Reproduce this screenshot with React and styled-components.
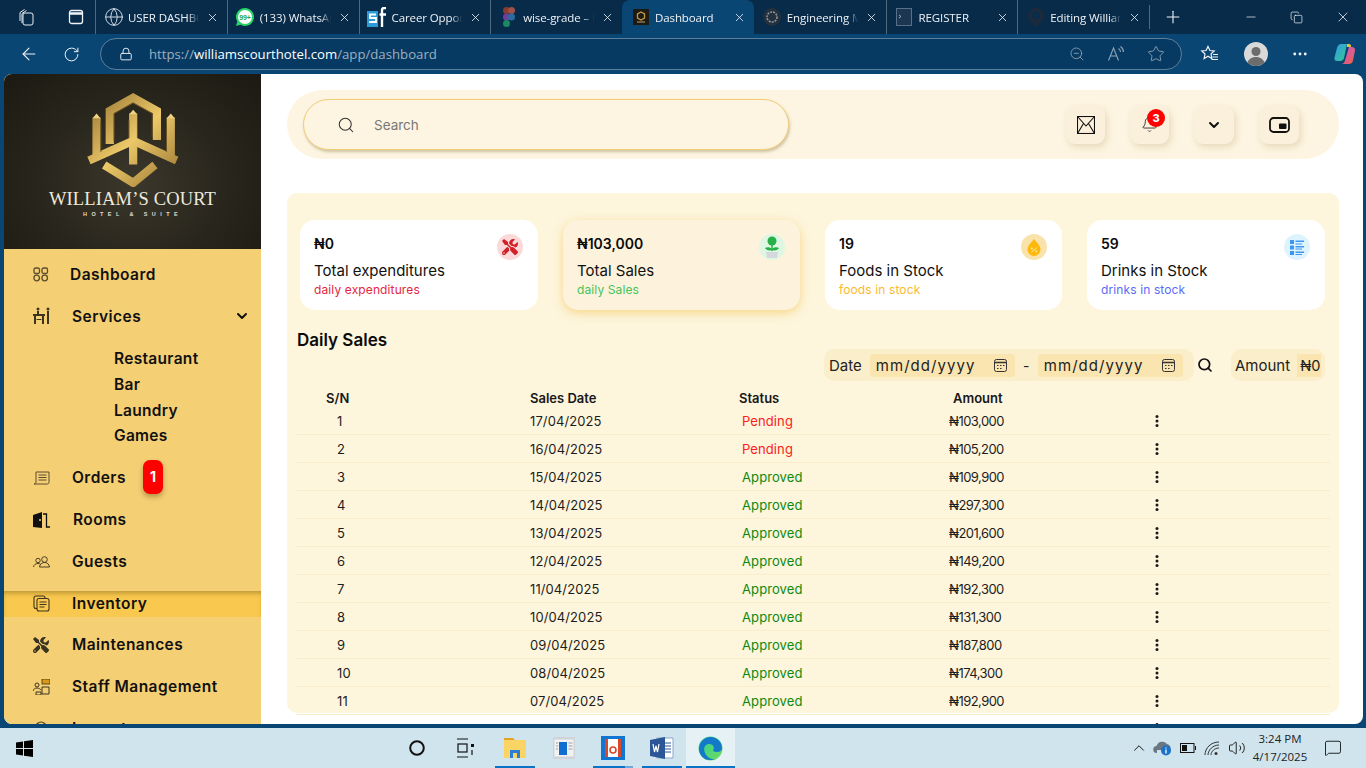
import styled, { createGlobalStyle } from 'styled-components';
import {
    ArrowLeft, RotateCw, Lock, ZoomOut, Star, Plus, X, Minus, Copy, Search, Bell, ChevronDown, ChevronUp,
    Globe, MoreHorizontal, MessageSquare, Volume2,
} from 'lucide-react';
import { FaTools } from 'react-icons/fa';

const UI = '"Inter", "Noto Sans", sans-serif';
const CHROME = '"Open Sans", "Noto Sans", sans-serif';

const GlobalStyle = createGlobalStyle`
    html, body { margin: 0; padding: 0; overflow: hidden; }
    * { box-sizing: border-box; }
    body { font-family: ${UI}; }
`;

const tabs = [
    { title: 'USER DASHBOARD', icon: 'globe' },
    { title: '(133) WhatsApp', icon: 'whatsapp' },
    { title: 'Career Opportunities', icon: 'sf' },
    { title: 'wise-grade – Figma', icon: 'figma' },
    { title: 'Dashboard', icon: 'logo', active: true },
    { title: 'Engineering Manager', icon: 'gpt' },
    { title: 'REGISTER', icon: 'term' },
    { title: 'Editing William', icon: 'github' },
];

const sales = [
    ['17/04/2025', 'Pending', '103,000'],
    ['16/04/2025', 'Pending', '105,200'],
    ['15/04/2025', 'Approved', '109,900'],
    ['14/04/2025', 'Approved', '297,300'],
    ['13/04/2025', 'Approved', '201,600'],
    ['12/04/2025', 'Approved', '149,200'],
    ['11/04/2025', 'Approved', '192,300'],
    ['10/04/2025', 'Approved', '131,300'],
    ['09/04/2025', 'Approved', '187,800'],
    ['08/04/2025', 'Approved', '174,300'],
    ['07/04/2025', 'Approved', '192,900'],
    ['06/04/2025', 'Approved', '158,400'],
];

function TabIcon({ kind }) {
    if (kind === 'globe') return <Globe size={20} color="#cfd8e0" strokeWidth={1.2} />;
    if (kind === 'whatsapp') return (
        <svg width="20" height="20" viewBox="0 0 20 20">
            <path d="M10 1a9 9 0 0 0-7.700 13.600L1 19l4.500-1.200A9 9 0 1 0 10 1z" fill="#25d366" />
            <circle cx="10" cy="10" r="7" fill="#fff" />
            <text x="10" y="12.500" textAnchor="middle" fontSize="7" fontWeight="700" fontFamily="Liberation Sans, sans-serif" fill="#25a84e">99+</text>
        </svg>
    );
    if (kind === 'sf') return (
        <svg width="20" height="20" viewBox="0 0 20 20">
            <rect x="0" y="4" width="11" height="16" fill="#2a9bd8" />
            <path d="M9 7.500H3v3.500h6v4H2" fill="none" stroke="#fff" strokeWidth="1.800" />
            <path d="M19 1h-2c-1.200 0-2 .8-2 2v17M12.500 7.500H19" fill="none" stroke="#fff" strokeWidth="2.400" />
        </svg>
    );
    if (kind === 'figma') return (
        <svg width="12" height="20" viewBox="0 0 12 20">
            <circle cx="3.500" cy="3.500" r="3.500" fill="#8c3b2e" />
            <circle cx="8.500" cy="3.500" r="3.500" fill="#a0524a" />
            <circle cx="3.500" cy="10" r="3.500" fill="#6e3d9e" />
            <circle cx="8.500" cy="10" r="3.500" fill="#2a6c9e" />
            <circle cx="3.500" cy="16.500" r="3.500" fill="#1a8a62" />
        </svg>
    );
    if (kind === 'logo') return (
        <svg width="16" height="16" viewBox="0 0 16 16">
            <rect width="16" height="16" fill="#1d1a14" />
            <path d="M8 3l3.500 2v4L8 11 4.500 9V5z" fill="none" stroke="#c49a45" strokeWidth="1.300" />
            <rect x="4" y="12.500" width="8" height="1" fill="#b8a47a" />
        </svg>
    );
    if (kind === 'gpt') return (
        <svg width="18" height="18" viewBox="0 0 18 18">
            <circle cx="9" cy="9" r="9" fill="#24303c" />
            <circle cx="9" cy="9" r="5" fill="none" stroke="#8d99a4" strokeWidth="1.500" strokeDasharray="2 1" />
        </svg>
    );
    if (kind === 'term') return (
        <svg width="16" height="18" viewBox="0 0 16 18">
            <rect x="0.500" y="0.500" width="15" height="17" fill="#1c3651" stroke="#567089" />
            <path d="M3 7l2 1.500L3 10" fill="none" stroke="#b6c2cc" strokeWidth="0.800" />
        </svg>
    );
    return (
        <svg width="18" height="20" viewBox="0 0 18 20">
            <path d="M9 1C4.500 1 1 4.500 1 9c0 3.600 2.300 6.600 5.500 7.700V19h5v-2.300C14.700 15.600 17 12.600 17 9c0-4.500-3.500-8-8-8z" fill="#1c2b3b" />
            <circle cx="9" cy="8.500" r="4" fill="#0a2d4c" />
        </svg>
    );
}

function WorkspacesIcon() {
    return (
        <svg width="18" height="18" viewBox="0 0 18 18" fill="none" stroke="#e6edf2" strokeWidth="1">
            <rect x="6" y="5" width="10" height="12" rx="2" />
            <path d="M5 15V5.500L9.500 2.500M3 13V4.500L7.500 1.500" />
        </svg>
    );
}

function TabBarIcon() {
    return (
        <svg width="16" height="16" viewBox="0 0 16 16" fill="none" stroke="#f0f4f7" strokeWidth="1.300">
            <rect x="1.500" y="1.500" width="13" height="13" rx="2" />
            <path d="M1.500 4.500h13" strokeWidth="2.500" />
        </svg>
    );
}

function ReadAloudIcon() {
    return (
        <svg width="18" height="18" viewBox="0 0 18 18" fill="none" stroke="#8ea3b5" strokeWidth="1.100">
            <path d="M1.500 15.500L6.500 3l5 12.500M3.300 11h6.400" />
            <path d="M11.500 3.500c1.300.8 2 2 2 3.500M13.500 1.500c1.900 1.300 3 3.300 3 5.500" />
        </svg>
    );
}

function FavoritesIcon() {
    return (
        <svg width="20" height="20" viewBox="0 0 20 20" fill="none" stroke="#f0f4f7" strokeWidth="1.200">
            <path d="M8 2.500l1.900 4 4.300.5-3.200 3 .9 4.500L8 12.300 4.100 14.500 5 10 1.800 7l4.300-.5z" />
            <path d="M13 10.500h5M12.500 13h5.500M11.500 15.500h6.500" />
        </svg>
    );
}

function Avatar() {
    return (
        <svg width="24" height="24" viewBox="0 0 24 24">
            <circle cx="12" cy="12" r="12" fill="#d9d9d9" />
            <circle cx="12" cy="9.500" r="4.500" fill="#6d6d6d" />
            <path d="M3.500 20.500c1.500-4 5-5.500 8.500-5.500s7 1.500 8.500 5.500A12 12 0 0 1 12 24a12 12 0 0 1-8.500-3.500z" fill="#6d6d6d" />
        </svg>
    );
}

function CopilotIcon() {
    return (
        <svg width="24" height="24" viewBox="0 0 24 24">
            <defs>
                <linearGradient id="copA" x1="0" y1="0" x2="1" y2="1">
                    <stop offset="0" stopColor="#2f9be8" />
                    <stop offset="1" stopColor="#38c98d" />
                </linearGradient>
                <linearGradient id="copB" x1="0" y1="0" x2="1" y2="1">
                    <stop offset="0" stopColor="#c45be0" />
                    <stop offset="1" stopColor="#f2603b" />
                </linearGradient>
            </defs>
            <path d="M8 2h6l-3 14c-.3 1.500-1.500 3-4 3H4c-2 0-3-1.500-2.500-3.500L4 6c.5-2 2-4 4-4z" fill="url(#copA)" />
            <path d="M16 5h3c2 0 3.300 1.500 3 3.500l-2 10c-.4 2-2 3.500-4 3.500H9c1.500-.5 2.500-1.700 3-3.500z" fill="url(#copB)" />
            <path d="M14 2h2c1.500 0 2 1.200 2 3h-4z" fill="#f0c23b" />
        </svg>
    );
}

function Logo() {
    return (
        <svg width="94" height="96" viewBox="253 48 285 290">
            <defs>
                <linearGradient id="gold" gradientUnits="userSpaceOnUse" x1="265" y1="60" x2="525" y2="330">
                    <stop offset="0" stopColor="#94712f" />
                    <stop offset="0.5" stopColor="#ecc869" />
                    <stop offset="1" stopColor="#9a7632" />
                </linearGradient>
            </defs>
            <g fill="none" stroke="url(#gold)" strokeWidth="25" strokeLinejoin="miter">
                <path d="M325 208V108L396 68l72 40V196" />
                <path d="M285 128V254M510 128V254" />
                <path d="M262 258L396 198l132 60" />
                <path d="M396 116V270" />
                <path d="M308 272L396 326l66-54" />
            </g>
            <g fill="none" stroke="#6f5322" strokeWidth="3">
                <path d="M338 200V116L396 84l58 32V186" />
                <path d="M298 140V232M497 140V232M383 135V190M409 135V190" />
            </g>
            <g fill="#efd184">
                <path d="M285 116l12 14h-24zM510 116l12 14h-24zM396 104l12 14h-24z" />
            </g>
        </svg>
    );
}

const NavIcons = {
    dashboard: (
        <svg width="16" height="15" viewBox="0 0 16 15" fill="none" stroke="#5a4d2c" strokeWidth="1.300">
            <rect x="1" y="1" width="5.500" height="5.500" rx="1.500" />
            <rect x="9" y="1" width="5.500" height="5.500" rx="1.500" />
            <circle cx="3.700" cy="11" r="2.800" />
            <circle cx="11.700" cy="11" r="2.800" />
        </svg>
    ),
    services: (
        <svg width="17" height="18" viewBox="0 0 17 18" fill="#3d3420">
            <circle cx="5" cy="2" r="1.500" />
            <circle cx="15" cy="2" r="1.500" />
            <path d="M0 7h12v2H0zM1 9h2v8H1zM9 9h2v8H9zM4 4h2v3H4zM14 4h2v13h-2zM3.500 12h5v1h-5z" />
        </svg>
    ),
    orders: (
        <svg width="17" height="14" viewBox="0 0 17 14" fill="none" stroke="#5a4d2c" strokeWidth="1">
            <path d="M3 1h13v10c0 1-.5 2-1.500 2H1c1 0 2-1 2-2z" />
            <path d="M5.500 4h8M5.500 6.500h8M5.500 9h8" />
        </svg>
    ),
    rooms: (
        <svg width="18" height="16" viewBox="0 0 18 16">
            <path d="M1 15V3l9-3v16z" fill="#111" />
            <path d="M11 2h3.500v13H18" fill="none" stroke="#111" strokeWidth="1.300" />
            <circle cx="8" cy="8" r="1" fill="#f5cf74" />
        </svg>
    ),
    guests: (
        <svg width="17" height="12" viewBox="0 0 17 12" fill="none" stroke="#4a4026" strokeWidth="1">
            <circle cx="5" cy="4.500" r="2.200" />
            <circle cx="11.500" cy="3.500" r="2.800" />
            <path d="M.5 11c.4-2.500 2.300-3.500 4.500-3.500 1 0 2 .3 2.700 .9M6.500 11c.4-3 2.500-4.500 5-4.500s4.600 1.500 5 4.500z" />
        </svg>
    ),
    inventory: (
        <svg width="17" height="17" viewBox="0 0 17 17" fill="none" stroke="#3d3420" strokeWidth="1.100">
            <path d="M4 13.500H3c-1.200 0-2-.8-2-2V3c0-1.200.8-2 2-2h7c1.200 0 2 .8 2 2" />
            <rect x="4" y="3.500" width="12" height="12.500" rx="2" />
            <path d="M6.500 7h7M6.500 9.500h7M6.500 12h5" />
        </svg>
    ),
    maintenance: <FaTools size={16} color="#3a3322" />,
    staff: (
        <svg width="17" height="16" viewBox="0 0 17 16">
            <rect x="9" y="0" width="8" height="5" fill="#d99a17" stroke="#3d3420" strokeWidth="0.800" />
            <circle cx="4" cy="6" r="2" fill="none" stroke="#3d3420" />
            <path d="M0 12c.5-2 2-3 4-3s3 1 4 2M9 8h7v7H9zM3 13h5v3H3z" fill="none" stroke="#3d3420" />
        </svg>
    ),
    lockers: (
        <svg width="17" height="16" viewBox="0 0 17 16" fill="none" stroke="#3d3420" strokeWidth="1.200">
            <circle cx="8" cy="6" r="5" />
        </svg>
    ),
};

function NavEntry({ icon, label, gap = 40, active, children }) {
    return (
        <NavRow $active={active}>
            <NavIconSlot>{NavIcons[icon]}</NavIconSlot>
            <NavLabel $gap={gap}>{label}</NavLabel>
            {children}
        </NavRow>
    );
}

function DropIcon() {
    return (
        <svg width="16" height="17" viewBox="0 0 16 17">
            <path d="M8 0c3 4 6.500 6.500 6.500 10.500a6.500 6.500 0 0 1-13 0C1.500 6.500 5 4 8 0z" fill="#fdb90b" />
            <circle cx="5.800" cy="9.500" r="1" fill="#fde9a8" />
            <circle cx="10.200" cy="12.500" r="1" fill="#fde9a8" />
            <path d="M5.500 13l5-4" stroke="#fde9a8" />
        </svg>
    );
}

function PlantIcon() {
    return (
        <svg width="20" height="24" viewBox="0 0 20 24">
            <circle cx="10" cy="6" r="4.500" fill="#27b04a" />
            <path d="M10 10v6" stroke="#27b04a" strokeWidth="1.500" />
            <path d="M10 14c-2-2-5-2-7-1 1 2 4 3 7 2zM10 14c2-2 5-2 7-1-1 2-4 3-7 2z" fill="#27b04a" />
            <path d="M4 17h12l-1 6H5z" fill="#d5d9de" />
        </svg>
    );
}

function ListIcon() {
    return (
        <svg width="14" height="15" viewBox="0 0 14 15" fill="#3d97f0">
            <path d="M0 0h4v4H0zM0 5.500h4v4H0zM0 11h4v4H0zM5.500 .5H14V2H5.500zM5.500 3.500H12V4.500H5.500zM5.500 6H14v1.500H5.500zM5.500 8.500H12v1H5.500zM5.500 11.500H14V13H5.500zM5.500 14H12v1H5.500z" />
        </svg>
    );
}

function CalendarIcon() {
    return (
        <svg width="13" height="13" viewBox="0 0 13 13" fill="none" stroke="#333" strokeWidth="1">
            <rect x="0.500" y="0.500" width="12" height="12" rx="2" />
            <path d="M.5 3.500h12" strokeWidth="1.500" />
            <path d="M3 6.500h1.500M6 6.500h1.500M9 6.500h1.500M3 9.500h1.500M6 9.500h1.500" />
        </svg>
    );
}

function Kebab() {
    return (
        <svg width="4" height="12" viewBox="0 0 4 12" fill="#1a1a1a">
            <circle cx="2" cy="1.500" r="1.500" />
            <circle cx="2" cy="6" r="1.500" />
            <circle cx="2" cy="10.500" r="1.500" />
        </svg>
    );
}

function WifiFan() {
    return (
        <svg width="17" height="15" viewBox="0 0 17 15" fill="none" stroke="#333" strokeWidth="1">
            <path d="M1 14C1 7 7 1 15 1M4 14c0-5 5-10 11-10M7 14c0-3.500 3.500-7 8-7" />
            <circle cx="12" cy="12.500" r="1.500" fill="#333" stroke="none" />
        </svg>
    );
}

function StatCard({ value, label, note, color, tint, icon, active }) {
    return (
        <Card $active={active}>
            <CardValue>{value}</CardValue>
            <CardLabel>{label}</CardLabel>
            <CardNote $color={color}>{note}</CardNote>
            <CardBadge $tint={tint}>{icon}</CardBadge>
        </Card>
    );
}

export default function App() {
    return (
        <Screen>
            <GlobalStyle />
            <TabStrip>
                <StripIcon $w={52}><WorkspacesIcon /></StripIcon>
                <StripIcon $w={32}><TabBarIcon /></StripIcon>
                <TabList>
                    {tabs.map((tab) => (
                        <Tab key={tab.title} $active={tab.active}>
                            <TabFav><TabIcon kind={tab.icon} /></TabFav>
                            <TabTitle>{tab.title}</TabTitle>
                            <X size={13} color="#eef2f5" strokeWidth={1.5} />
                        </Tab>
                    ))}
                </TabList>
                <NewTab><Plus size={20} color="#f0f4f7" strokeWidth={1.3} /></NewTab>
                <WindowButtons>
                    <Minus size={14} color="#f0f4f7" strokeWidth={1.2} />
                    <Copy size={13} color="#f0f4f7" strokeWidth={1.3} />
                    <X size={16} color="#f0f4f7" strokeWidth={1.2} />
                </WindowButtons>
            </TabStrip>

            <Toolbar>
                <ToolButton $w={43}><ArrowLeft size={20} color="#eef2f5" strokeWidth={1.3} /></ToolButton>
                <ToolButton $w={43}><RotateCw size={17} color="#eef2f5" strokeWidth={1.4} /></ToolButton>
                <AddressBar>
                    <Lock size={14} color="#eef2f5" strokeWidth={1.6} />
                    <Url>https://<b>williamscourthotel.com</b>/app/dashboard</Url>
                    <AddressIcons>
                        <ZoomOut size={16} color="#8ea3b5" strokeWidth={1.3} />
                        <ReadAloudIcon />
                        <Star size={18} color="#8ea3b5" strokeWidth={1.2} />
                    </AddressIcons>
                </AddressBar>
                <ToolEnd>
                    <FavoritesIcon />
                    <Avatar />
                    <MoreHorizontal size={18} color="#eef2f5" strokeWidth={1.8} />
                    <CopilotIcon />
                </ToolEnd>
            </Toolbar>

            <Frame>
                <Page>
                    <Sidebar>
                        <Brand>
                            <Logo />
                            <BrandName>WILLIAM’S COURT</BrandName>
                            <BrandSub>HOTEL &amp; SUITE</BrandSub>
                        </Brand>
                        <Nav>
                            <NavEntry icon="dashboard" label="Dashboard" gap={38} />
                            <NavEntry icon="services" label="Services">
                                <NavChevron><ChevronDown size={16} color="#111" strokeWidth={3} /></NavChevron>
                            </NavEntry>
                            <SubNav>
                                <SubItem>Restaurant</SubItem>
                                <SubItem>Bar</SubItem>
                                <SubItem>Laundry</SubItem>
                                <SubItem>Games</SubItem>
                            </SubNav>
                            <NavEntry icon="orders" label="Orders">
                                <OrderBadge>1</OrderBadge>
                            </NavEntry>
                            <NavEntry icon="rooms" label="Rooms" gap={41} />
                            <NavEntry icon="guests" label="Guests" />
                            <NavEntry icon="inventory" label="Inventory" active />
                            <NavEntry icon="maintenance" label="Maintenances" />
                            <NavEntry icon="staff" label="Staff Management" />
                            <NavEntry icon="lockers" label="Logout" />
                        </Nav>
                    </Sidebar>

                    <Main>
                        <TopBar>
                            <SearchBox>
                                <Search size={18} color="#333" strokeWidth={1.4} />
                                <SearchText>Search</SearchText>
                            </SearchBox>
                            <TopActions>
                                <SquareButton>
                                    <svg width="18" height="18" viewBox="0 0 18 18" fill="none" stroke="#111" strokeWidth="1.100">
                                        <rect x="0.500" y="0.500" width="17" height="17" />
                                        <path d="M.5 .5L9 10 17.500 .5M.5 17.500L6.500 7.500M17.500 17.500L11.500 7.500" />
                                    </svg>
                                </SquareButton>
                                <SquareButton>
                                    <Bell size={17} color="#333" strokeWidth={1.3} />
                                    <BellCount>3</BellCount>
                                </SquareButton>
                                <SquareButton $wide><ChevronDown size={16} color="#111" strokeWidth={3} /></SquareButton>
                                <SquareButton $wide>
                                    <svg width="21" height="16" viewBox="0 0 21 16" fill="none">
                                        <rect x="1" y="1" width="19" height="14" rx="3.500" stroke="#111" strokeWidth="1.800" />
                                        <rect x="10" y="6.500" width="7.500" height="5.500" rx="1" fill="#111" />
                                    </svg>
                                </SquareButton>
                            </TopActions>
                        </TopBar>

                        <Panel>
                            <CardGrid>
                                <StatCard value="₦0" label="Total expenditures" note="daily expenditures" color="#e3263f" tint="#fbd9d9" icon={<FaTools size={16} color="#d31f26" />} />
                                <StatCard value="₦103,000" label="Total Sales" note="daily Sales" color="#45c45c" tint="#def7e3" icon={<PlantIcon />} active />
                                <StatCard value="19" label="Foods in Stock" note="foods in stock" color="#fdb92e" tint="#fae3ab" icon={<DropIcon />} />
                                <StatCard value="59" label="Drinks in Stock" note="drinks in stock" color="#5a6cf5" tint="#ddf3fe" icon={<ListIcon />} />
                            </CardGrid>

                            <SectionTitle>Daily Sales</SectionTitle>

                            <FilterRow>
                                <FilterGroup>
                                    <FilterLabel>Date</FilterLabel>
                                    <DateField>mm/dd/yyyy<CalendarIcon /></DateField>
                                    <Dash>-</Dash>
                                    <DateField>mm/dd/yyyy<CalendarIcon /></DateField>
                                </FilterGroup>
                                <FilterSearch><Search size={16} color="#111" strokeWidth={2.6} /></FilterSearch>
                                <AmountGroup>
                                    <FilterLabel>Amount</FilterLabel>
                                    <AmountValue>₦0</AmountValue>
                                </AmountGroup>
                            </FilterRow>

                            <SalesTable>
                                <HeadRow>
                                    <HeadCell $pad={30}>S/N</HeadCell>
                                    <HeadCell>Sales Date</HeadCell>
                                    <HeadCell>Status</HeadCell>
                                    <HeadCell $pad={4}>Amount</HeadCell>
                                </HeadRow>
                                {sales.map((row, i) => (
                                    <BodyRow key={row[0]}>
                                        <Cell $pad={41}>{i + 1}</Cell>
                                        <Cell>{row[0]}</Cell>
                                        <StatusCell $pending={row[1] === 'Pending'}>{row[1]}</StatusCell>
                                        <AmountCell>₦{row[2]}</AmountCell>
                                        <KebabCell><Kebab /></KebabCell>
                                    </BodyRow>
                                ))}
                            </SalesTable>
                        </Panel>
                    </Main>
                </Page>
            </Frame>

            <Taskbar>
                <StartButton>
                    <svg width="17" height="17" viewBox="0 0 17 17" fill="#000">
                        <path d="M0 2.400l7-1V8H0zM8 1.200L17 0v8H8zM0 9h7v6.600l-7-1zM8 9h9v8l-9-1.200z" />
                    </svg>
                </StartButton>
                <TaskGroup>
                    <TaskItem>
                        <svg width="16" height="16" viewBox="0 0 16 16"><circle cx="8" cy="8" r="6.800" fill="none" stroke="#111" strokeWidth="2" /></svg>
                    </TaskItem>
                    <TaskItem>
                        <svg width="17" height="20" viewBox="0 0 17 20" fill="none" stroke="#111" strokeWidth="1.200">
                            <path d="M0 1h11M0 19h11" />
                            <rect x="1" y="6" width="9" height="8" />
                            <rect x="14" y="6" width="3" height="3" fill="#111" stroke="none" />
                            <path d="M15 12v5" />
                        </svg>
                    </TaskItem>
                    <TaskItem $open>
                        <svg width="22" height="22" viewBox="0 0 22 22">
                            <path d="M0 1h9l2 2H0z" fill="#e0a526" />
                            <rect x="0" y="3" width="22" height="18" fill="#fad565" />
                            <path d="M6 21v-8h10v8h-3v-5H9v5z" fill="#2b7fd3" />
                        </svg>
                    </TaskItem>
                    <TaskItem>
                        <svg width="22" height="22" viewBox="0 0 22 22">
                            <rect width="22" height="22" rx="1" fill="#cfd4d8" />
                            <rect x="1.500" y="2.500" width="19" height="17" fill="#f0f2f4" />
                            <rect x="6" y="5" width="8" height="13" fill="#0f6fd1" />
                            <path d="M3 6h2M3 9h2M3 12h2M15.500 6h4M15.500 9h4M15.500 12h4" stroke="#9aa2a9" />
                        </svg>
                    </TaskItem>
                    <TaskItem $open $partial>
                        <svg width="24" height="24" viewBox="0 0 24 24">
                            <rect width="24" height="24" fill="#1175d3" />
                            <rect x="4" y="3" width="16" height="18" fill="#fff" />
                            <rect x="4" y="3" width="3" height="18" fill="#d9482b" />
                            <rect x="17" y="3" width="3" height="18" fill="#d9482b" />
                            <circle cx="12" cy="14" r="3" fill="none" stroke="#d9482b" strokeWidth="1.600" />
                        </svg>
                    </TaskItem>
                    <TaskItem $open>
                        <svg width="24" height="24" viewBox="0 0 24 24">
                            <path d="M7 2h16v20H7z" fill="#fff" stroke="#8ea7cb" />
                            <path d="M15 7h6M15 10h6M15 13h6M15 16h6" stroke="#2b5797" />
                            <path d="M0 4l15-3v22L0 20z" fill="#2b5797" />
                            <path d="M3 8l1.500 8 1.500-6 1.500 6L9 8" fill="none" stroke="#fff" strokeWidth="1.200" />
                        </svg>
                    </TaskItem>
                    <TaskItem $open $active>
                        <svg width="25" height="25" viewBox="0 0 25 25">
                            <defs>
                                <linearGradient id="edgeA" x1="0" y1="0" x2="1" y2="1">
                                    <stop offset="0" stopColor="#2fcf9a" />
                                    <stop offset="1" stopColor="#6fdc5c" />
                                </linearGradient>
                            </defs>
                            <circle cx="12.500" cy="12.500" r="12" fill="url(#edgeA)" />
                            <path d="M1 12C2 5 7 1 12.500 1 19 1 24 6 24 12c0 2.500-2 4-5 4-2.500 0-4-.8-4-2 2-2 .5-6-4-6-5 0-6 6-3.500 10 2 3 5 5.500 9 5.500C7 26 1 20 1 12z" fill="#1479c9" />
                        </svg>
                    </TaskItem>
                </TaskGroup>
                <Tray>
                    <TraySlot><ChevronUp size={18} color="#111" strokeWidth={1.3} /></TraySlot>
                    <TraySlot>
                        <svg width="20" height="16" viewBox="0 0 20 16">
                            <path d="M4 13a3.500 3.500 0 0 1-.5-7A6 6 0 0 1 14 4a4 4 0 0 1 3 6H4z" fill="#6c7680" />
                            <circle cx="13" cy="10.500" r="5" fill="#1a73c8" />
                            <path d="M13 9.500v4M13 7.500v1" stroke="#fff" strokeWidth="1.300" />
                        </svg>
                    </TraySlot>
                    <TraySlot>
                        <svg width="16" height="10" viewBox="0 0 16 10" fill="none" stroke="#111">
                            <rect x="0.500" y="0.500" width="13.500" height="9" />
                            <rect x="2" y="2" width="5" height="6" fill="#111" stroke="none" />
                            <path d="M15.500 3v4" />
                        </svg>
                    </TraySlot>
                    <TraySlot><WifiFan /></TraySlot>
                    <TraySlot><Volume2 size={18} color="#111" strokeWidth={1.2} /></TraySlot>
                    <Clock>
                        <span>3:24 PM</span>
                        <span>4/17/2025</span>
                    </Clock>
                    <Notify><MessageSquare size={18} color="#111" strokeWidth={1.2} /></Notify>
                </Tray>
            </Taskbar>
        </Screen>
    );
}

const Screen = styled.div`
    width: 1366px;
    height: 768px;
    display: flex;
    flex-direction: column;
    overflow: hidden;
    background: #0a4674;
`;

const TabStrip = styled.div`
    height: 34px;
    display: flex;
    align-items: center;
    background: #082b4a;
    color: #eef2f5;
    font-family: ${CHROME};
`;

const StripIcon = styled.div`
    width: ${(props) => props.$w}px;
    display: flex;
    justify-content: flex-end;
    padding-right: ${(props) => (props.$w === 52 ? 17 : 0)}px;
`;

const TabList = styled.div`
    display: flex;
    height: 100%;
    margin-left: 11px;
`;

const Tab = styled.div`
    width: 131.75px;
    height: 100%;
    display: flex;
    align-items: center;
    padding: 0 8px 0 5px;
    position: relative;
    font-size: 11.5px;
    letter-spacing: -.1px;
    background: ${(props) => (props.$active ? '#0a4674' : 'transparent')};
    border-radius: ${(props) => (props.$active ? '8px 8px 0 0' : '0')};
    border-left: 1px solid ${(props) => (props.$active ? 'transparent' : '#51697f')};
    & > svg { flex-shrink: 0; }
    &:nth-child(n+5) { border-left-color: transparent; }
    &:nth-child(n+7) { border-left-color: #51697f; }
`;

const TabFav = styled.div`
    width: 25px;
    flex-shrink: 0;
    display: flex;
    justify-content: center;
`;

const TabTitle = styled.div`
    width: 78px;
    margin: 0 7px 0 0;
    padding-left: 2px;
    white-space: nowrap;
    overflow: hidden;
    mask-image: linear-gradient(to right, #000 85%, transparent);
`;

const NewTab = styled.div`
    width: 46px;
    height: 24px;
    display: flex;
    justify-content: center;
    align-items: center;
    border-left: 1px solid #51697f;
`;

const WindowButtons = styled.div`
    margin-left: auto;
    width: 147px;
    padding: 0 15px 0 25px;
    display: flex;
    justify-content: space-between;
    align-items: center;
`;

const Toolbar = styled.div`
    height: 40px;
    display: flex;
    align-items: center;
    padding-left: 7px;
    background: #0a4674;
    font-family: ${CHROME};
`;

const ToolButton = styled.div`
    width: ${(props) => props.$w}px;
    display: flex;
    justify-content: center;
`;

const AddressBar = styled.div`
    width: 1082px;
    height: 32px;
    margin-left: 7px;
    padding: 0 16px 0 18px;
    display: flex;
    align-items: center;
    gap: 16px;
    border: 1px solid #5d7f9b;
    border-radius: 16px;
    background: #073a63;
`;

const Url = styled.div`
    font-size: 13.2px;
    color: #9db0c0;
    b { font-weight: 400; color: #fff; }
`;

const AddressIcons = styled.div`
    margin-left: auto;
    width: 96px;
    display: flex;
    justify-content: space-between;
    align-items: center;
`;

const ToolEnd = styled.div`
    flex: 1;
    display: flex;
    align-items: center;
    justify-content: space-between;
    padding: 0 9px 0 18px;
`;

const Frame = styled.div`
    height: 654px;
    padding: 0 3px 4px 4px;
    background: #0a4674;
`;

const Page = styled.div`
    height: 100%;
    display: flex;
    border-radius: 8px;
    overflow: hidden;
    background: #fff;
`;

const Sidebar = styled.aside`
    width: 257px;
    flex-shrink: 0;
    overflow: hidden;
    background: #f5cf74;
`;

const Brand = styled.div`
    height: 175px;
    padding-top: 17px;
    display: flex;
    flex-direction: column;
    align-items: center;
    background: radial-gradient(ellipse at 50% 62%, #3b372b 0%, #29261d 50%, #1c1912 100%);
`;

const BrandName = styled.div`
    margin-top: 2px;
    font-family: "Liberation Serif", serif;
    font-size: 18.5px;
    line-height: 20px;
    letter-spacing: .15px;
    color: #efe9dc;
    white-space: nowrap;
`;

const BrandSub = styled.div`
    margin-top: 1px;
    font-family: "Liberation Sans", sans-serif;
    font-size: 5.5px;
    font-weight: 700;
    line-height: 8px;
    letter-spacing: 4.4px;
    color: #e4ddcc;
    white-space: nowrap;
`;

const Nav = styled.nav`
    padding-top: 4px;
`;

const NavRow = styled.div`
    height: ${(props) => (props.$active ? '26px' : '42px')};
    margin: ${(props) => (props.$active ? '8px 0 7px' : '0')};
    padding-left: 28px;
    display: flex;
    align-items: center;
    position: relative;
    background: ${(props) => (props.$active ? '#f9c84f' : 'transparent')};
    box-shadow: ${(props) => (props.$active ? 'inset 0 4px 5px -2px rgba(120, 90, 20, .5)' : 'none')};
`;

const NavIconSlot = styled.div`
    width: 18px;
    height: 18px;
    flex-shrink: 0;
    display: flex;
    align-items: center;
    justify-content: center;
`;

const NavLabel = styled.div`
    margin-left: ${(props) => props.$gap - 18}px;
    font-size: 15.5px;
    font-weight: 600;
    letter-spacing: .45px;
    color: #111;
    white-space: nowrap;
`;

const NavChevron = styled.div`
    position: absolute;
    right: 11px;
    top: 13px;
    display: flex;
`;

const SubNav = styled.div`
    padding: 9px 0 8px 110px;
`;

const SubItem = styled.div`
    height: 25.7px;
    display: flex;
    align-items: center;
    font-size: 15.5px;
    font-weight: 600;
    letter-spacing: .3px;
    color: #111;
`;

const OrderBadge = styled.div`
    position: absolute;
    left: 139px;
    top: 3px;
    width: 20px;
    height: 34px;
    border-radius: 7px;
    display: flex;
    align-items: center;
    justify-content: center;
    background: #fe0000;
    color: #fff;
    font-size: 14px;
    font-weight: 700;
    box-shadow: 0 3px 5px rgba(90, 60, 10, .4);
`;

const Main = styled.main`
    flex: 1;
    padding: 16px 24px 0 26px;
    overflow: hidden;
`;

const TopBar = styled.div`
    height: 69px;
    padding: 0 40px 0 16px;
    display: flex;
    align-items: center;
    justify-content: space-between;
    border-radius: 35px;
    background: #fdf5e1;
`;

const SearchBox = styled.div`
    width: 486px;
    height: 51px;
    padding-left: 33px;
    display: flex;
    align-items: center;
    gap: 19px;
    border: 1px solid #f3cc76;
    border-radius: 26px;
    background: #fdf5e1;
    box-shadow: 1px 2px 3px rgba(120, 100, 50, .35);
`;

const SearchText = styled.div`
    font-size: 13.5px;
    color: #777;
`;

const TopActions = styled.div`
    display: flex;
    gap: 25px;
`;

const SquareButton = styled.div`
    width: ${(props) => (props.$wide ? 40 : 39)}px;
    height: 38px;
    display: flex;
    align-items: center;
    justify-content: center;
    position: relative;
    border-radius: 9px;
    background: #fbf0db;
    box-shadow: 2px 3px 6px rgba(170, 140, 80, .25);
`;

const BellCount = styled.div`
    position: absolute;
    top: 3px;
    right: 4px;
    width: 18px;
    height: 18px;
    border-radius: 50%;
    display: flex;
    align-items: center;
    justify-content: center;
    background: #fe0000;
    color: #fff;
    font-size: 11px;
    font-weight: 800;
`;

const Panel = styled.section`
    height: 520px;
    margin-top: 34px;
    padding: 27px 14px 0 13px;
    border-radius: 10px;
    background: #fdf5dc;
`;

const CardGrid = styled.div`
    display: grid;
    grid-template-columns: 238px 237px 237px 238px;
    gap: 25px;
`;

const Card = styled.div`
    height: 90px;
    padding: 14px 14px 0;
    position: relative;
    border-radius: 15px;
    background: ${(props) => (props.$active ? '#fdf3dc' : '#fff')};
    box-shadow: ${(props) => (props.$active ? '0 3px 10px rgba(245, 207, 116, .8)' : 'none')};
`;

const CardValue = styled.div`
    height: 20px;
    font-size: 14px;
    line-height: 20px;
    font-weight: 600;
    color: #0b0b0b;
`;

const CardLabel = styled.div`
    margin-top: 7px;
    font-size: 15px;
    line-height: 20px;
    color: #111;
`;

const CardNote = styled.div`
    margin-top: 1px;
    font-size: 12px;
    line-height: 16px;
    letter-spacing: .12px;
    color: ${(props) => props.$color};
`;

const CardBadge = styled.div`
    position: absolute;
    top: 14px;
    right: 15px;
    width: 26px;
    height: 26px;
    border-radius: 50%;
    overflow: hidden;
    display: flex;
    align-items: center;
    justify-content: center;
    background: ${(props) => props.$tint};
`;

const SectionTitle = styled.h3`
    margin: 18px 0 0 -3px;
    height: 24px;
    font-size: 17px;
    line-height: 24px;
    font-weight: 600;
    color: #0b0b0b;
`;

const FilterRow = styled.div`
    height: 32px;
    margin-top: -3px;
    display: flex;
    justify-content: flex-end;
    align-items: center;
`;

const FilterGroup = styled.div`
    height: 32px;
    width: 370px;
    padding: 0 5px;
    display: flex;
    align-items: center;
    border-radius: 10px;
    background: #fbeecb;
`;

const FilterLabel = styled.div`
    font-size: 15px;
    color: #222;
    margin-right: 8px;
`;

const DateField = styled.div`
    width: 145px;
    height: 23px;
    padding: 0 8px 0 6px;
    display: flex;
    align-items: center;
    justify-content: space-between;
    border-radius: 4px;
    background: #fae5b0;
    font-size: 15px;
    letter-spacing: 1.05px;
    color: #222;
`;

const Dash = styled.div`
    width: 23px;
    text-align: center;
    font-size: 14px;
    color: #222;
`;

const FilterSearch = styled.div`
    width: 37px;
    padding-left: 3px;
    display: flex;
`;

const AmountGroup = styled.div`
    width: 94px;
    height: 32px;
    padding-left: 4px;
    display: flex;
    align-items: center;
    border-radius: 10px;
    background: #fbeecb;
`;

const AmountValue = styled.div`
    height: 23px;
    padding: 0 1px 0 3px;
    display: flex;
    align-items: center;
    margin-left: -1px;
    background: #fae5b0;
    font-size: 14.5px;
    color: #222;
`;

const SalesTable = styled.div`
    margin: 8px -5px 0 -4px;
`;

const gridColumns = 'grid-template-columns: 234px 209px 210px 205.5px 1fr;';

const HeadRow = styled.div`
    height: 18px;
    display: grid;
    ${gridColumns}
    align-items: center;
`;

const HeadCell = styled.div`
    padding-left: ${(props) => props.$pad || 0}px;
    font-size: 13px;
    font-weight: 600;
    color: #181818;
`;

const BodyRow = styled.div`
    height: 28px;
    display: grid;
    ${gridColumns}
    align-items: center;
    border-bottom: 1px solid #faeccb;
`;

const Cell = styled.div`
    padding-left: ${(props) => props.$pad || 0}px;
    font-size: 13px;
    letter-spacing: .1px;
    color: #1d1d1d;
`;

const StatusCell = styled(Cell)`
    padding-left: 3px;
    color: ${(props) => (props.$pending ? '#fb1c1c' : '#0d8a12')};
`;

const AmountCell = styled(Cell)`
    letter-spacing: -.55px;
`;

const KebabCell = styled.div`
    display: flex;
`;

const Taskbar = styled.div`
    height: 40px;
    display: flex;
    align-items: center;
    background: #d0e4ee;
    font-family: ${CHROME};
`;

const StartButton = styled.div`
    width: 48px;
    display: flex;
    justify-content: center;
`;

const TaskGroup = styled.div`
    height: 100%;
    margin-left: 344px;
    display: flex;
`;

const TaskItem = styled.div`
    width: 49px;
    height: 100%;
    display: flex;
    align-items: center;
    justify-content: center;
    position: relative;
    background: ${(props) => (props.$active ? '#e6f1f6' : 'transparent')};
    &::after {
        content: '';
        display: ${(props) => (props.$open ? 'block' : 'none')};
        position: absolute;
        left: ${(props) => (props.$active ? 0 : 5)}px;
        right: ${(props) => (props.$active ? 0 : 4)}px;
        bottom: 0;
        height: 2px;
        background: ${(props) => (props.$partial
            ? 'linear-gradient(to right, #0b72c6 80%, #6ea8d8 80%)'
            : '#0b72c6')};
    }
`;

const Tray = styled.div`
    margin-left: auto;
    height: 100%;
    display: flex;
    align-items: center;
    padding-right: 24px;
`;

const TraySlot = styled.div`
    width: 24.5px;
    display: flex;
    justify-content: center;
`;

const Clock = styled.div`
    width: 66px;
    margin-left: -2px;
    display: flex;
    flex-direction: column;
    align-items: center;
    font-size: 11.5px;
    line-height: 18px;
    color: #222;
`;

const Notify = styled.div`
    margin-left: 11px;
    display: flex;
`;
